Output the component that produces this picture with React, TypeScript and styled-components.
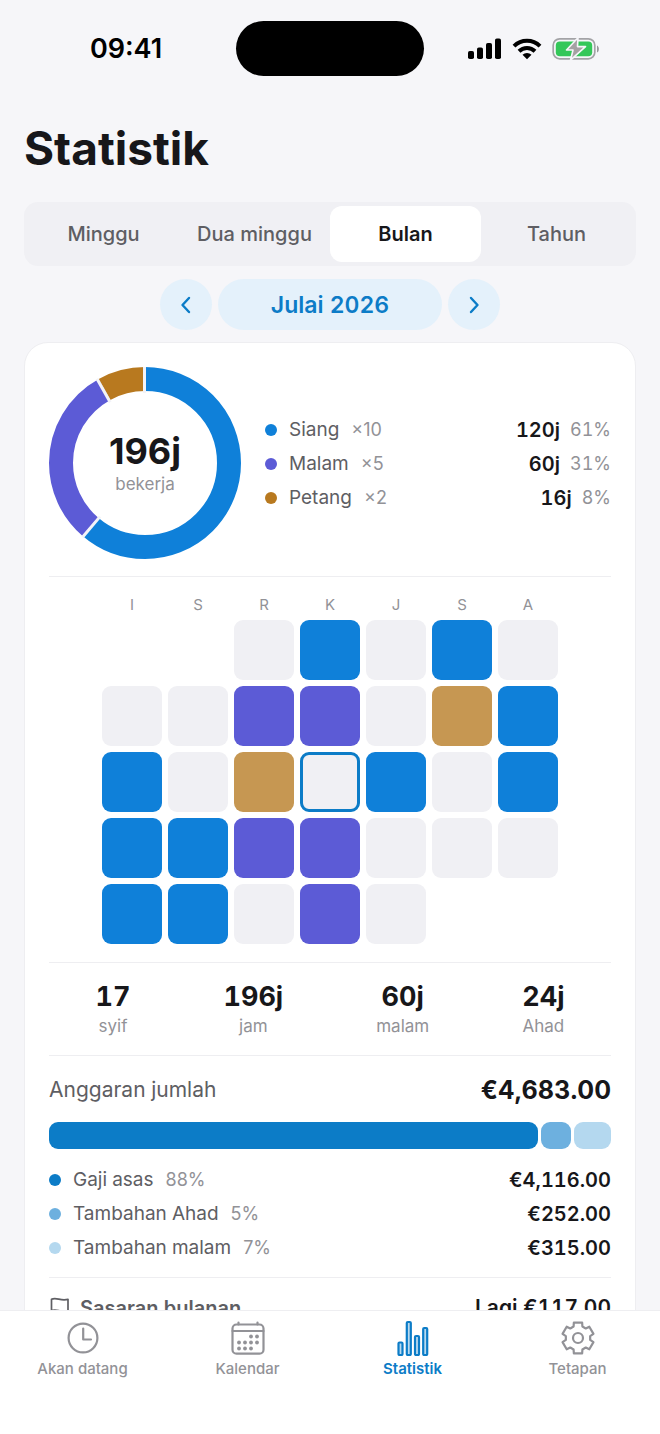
import React, { useState } from 'react'
import styled, { createGlobalStyle } from 'styled-components'

const color = {
  page: '#f6f6f9',
  card: '#ffffff',
  fill: '#f0f0f4',
  line: '#eeeef1',
  ink: '#17171a',
  text: '#5e5e63',
  muted: '#929297',
  accent: '#0c7cc7',
  accentSoft: '#e4f1fb',
  day: '#0f80d9',
  night: '#5c5bd6',
  evening: '#b8791f',
  eveningSoft: '#c69752',
}

const GlobalStyle = createGlobalStyle`
  * {
    box-sizing: border-box;
  }
  body {
    margin: 0;
    background: ${color.page};
    color: ${color.ink};
    font-family: Inter, 'Liberation Sans', sans-serif;
    font-variant-numeric: tabular-nums;
  }
  button {
    border: 0;
    padding: 0;
    font: inherit;
    cursor: pointer;
  }
`

const Screen = styled.div`
  display: flex;
  flex-direction: column;
  height: 100vh;
`
const StatusBar = styled.header`
  display: grid;
  grid-template-columns: 1fr 188px 1fr;
  align-items: center;
  padding-top: 21px;
`
const Clock = styled.time`
  padding-left: 16px;
  text-align: center;
  font-size: 27px;
  font-weight: 600;
  font-variant-numeric: normal;
  color: #000;
`
const Island = styled.div`
  height: 55px;
  border-radius: 28px;
  background: #000;
`
const StatusIcons = styled.div`
  display: flex;
  justify-content: center;
  align-items: center;
  gap: 10px;
  padding-right: 16px;
`
const Content = styled.main`
  flex: 1;
  min-height: 0;
  overflow: hidden;
  padding: 44px 24px 0;
`
const Title = styled.h1`
  margin: 0 0 26px;
  font-size: 46px;
  line-height: 56px;
  font-weight: 700;
`
const Segments = styled.div`
  display: grid;
  grid-template-columns: repeat(4, 1fr);
  height: 64px;
  padding: 4px;
  border-radius: 14px;
  background: ${color.fill};
`
const Segment = styled.button<{ $active: boolean }>`
  border-radius: 12px;
  background: ${(p) => (p.$active ? color.card : 'transparent')};
  color: ${(p) => (p.$active ? color.ink : color.text)};
  font-size: 20px;
  font-weight: ${(p) => (p.$active ? 600 : 500)};
  white-space: nowrap;
`
const Period = styled.div`
  display: flex;
  justify-content: center;
  gap: 6px;
  margin: 13px 0 12px;
`
const PeriodButton = styled.button<{ $wide?: boolean }>`
  display: flex;
  align-items: center;
  justify-content: center;
  width: ${(p) => (p.$wide ? 224 : 52)}px;
  height: 51px;
  border-radius: 26px;
  background: ${color.accentSoft};
  color: ${color.accent};
  font-size: 23px;
  font-weight: 600;
`
const Card = styled.section`
  padding: 24px;
  border: 1px solid ${color.line};
  border-radius: 24px;
  background: ${color.card};
`
const Block = styled.div`
  padding: 18px 0;
  border-bottom: 1px solid ${color.line};

  &:last-child {
    border-bottom: 0;
  }
`
const Overview = styled(Block)`
  display: flex;
  align-items: center;
  gap: 24px;
  padding: 0 0 17px;
`
const Donut = styled.div`
  display: grid;
  place-items: center;
  flex: none;
  width: 192px;
  height: 192px;

  > * {
    grid-area: 1 / 1;
  }
`
const DonutLabel = styled.div`
  text-align: center;
`
const Total = styled.div`
  font-size: 36px;
  line-height: 42px;
  font-weight: 700;
  font-variant-numeric: normal;
`
const Caption = styled.div`
  font-size: 17px;
  line-height: 24px;
  color: ${color.muted};
`
const Legend = styled.ul`
  display: flex;
  flex-direction: column;
  flex: 1;
  gap: 10px;
  margin: 0;
  padding: 2px 0 0;
  list-style: none;
`
const LegendRow = styled.li`
  display: flex;
  align-items: center;
  font-size: 19px;
  line-height: 24px;
  color: ${color.text};
`
const Dot = styled.span<{ $color: string }>`
  width: 12px;
  height: 12px;
  margin-right: 12px;
  border-radius: 50%;
  background: ${(p) => p.$color};
`
const Note = styled.span`
  margin-left: 12px;
  font-size: 18px;
  font-variant-numeric: normal;
  color: ${color.muted};
`
const Share = styled(Note)`
  margin-left: 10px;
  font-variant-numeric: tabular-nums;
`
const Amount = styled.span<{ $large?: boolean }>`
  margin-left: auto;
  font-size: ${(p) => (p.$large ? 21 : 20)}px;
  font-weight: 600;
  color: ${color.ink};
`
const Calendar = styled.div`
  display: grid;
  grid-template-columns: repeat(7, 60px);
  justify-content: center;
  gap: 6px;
`
const Weekday = styled.div`
  font-size: 15px;
  line-height: 19px;
  text-align: center;
  color: ${color.muted};
`
const Day = styled.div<{ $color: string; $today: boolean }>`
  height: 60px;
  border: ${(p) => (p.$today ? `3px solid ${color.accent}` : 0)};
  border-radius: 9px;
  background: ${(p) => p.$color};
`
const Figures = styled(Block)`
  display: flex;
  justify-content: space-around;
  padding: 18px 0 17px;
  text-align: center;
`
const FigureValue = styled.div`
  margin-bottom: 1px;
  font-size: 27px;
  line-height: 32px;
  font-weight: 700;
`
const Earnings = styled(Block)`
  padding-bottom: 17px;
`
const Estimate = styled.div`
  display: flex;
  justify-content: space-between;
  line-height: 32px;
  font-size: 21px;
  color: ${color.text};
`
const EstimateTotal = styled.span`
  font-size: 25px;
  font-weight: 700;
  font-variant-numeric: normal;
  color: ${color.ink};
`
const Bar = styled.div`
  display: flex;
  gap: 3px;
  height: 27px;
  margin: 16px 0 17px;
`
const BarPart = styled.div<{ $color: string }>`
  border-radius: 9px;
  background: ${(p) => p.$color};
`
const Goal = styled.div`
  display: flex;
  align-items: center;
  gap: 10px;
  font-size: 20px;
  line-height: 24px;
  font-weight: 600;
  color: ${color.text};
`
const TabBar = styled.nav`
  display: grid;
  grid-template-columns: repeat(4, 1fr);
  flex: none;
  height: 124px;
  border-top: 1px solid ${color.line};
  background: ${color.card};
`
const TabLink = styled.a<{ $active: boolean }>`
  display: flex;
  flex-direction: column;
  align-items: center;
  gap: 3px;
  padding-top: 9px;
  font-size: 15px;
  line-height: 20px;
  font-weight: ${(p) => (p.$active ? 600 : 500)};
  color: ${(p) => (p.$active ? color.accent : color.muted)};
  text-decoration: none;
`

const shifts = [
  { name: 'Siang', count: 10, hours: 120, share: 61, color: color.day },
  { name: 'Malam', count: 5, hours: 60, share: 31, color: color.night },
  { name: 'Petang', count: 2, hours: 16, share: 8, color: color.evening },
]

const pay = [
  { name: 'Gaji asas', share: 88, value: 4116, label: '€4,116.00', color: color.accent },
  { name: 'Tambahan Ahad', share: 5, value: 252, label: '€252.00', color: '#6db0df' },
  { name: 'Tambahan malam', share: 7, value: 315, label: '€315.00', color: '#b4d8ef' },
]

const figures = [
  { value: '17', label: 'syif' },
  { value: '196j', label: 'jam' },
  { value: '60j', label: 'malam' },
  { value: '24j', label: 'Ahad' },
]

// one letter per day: S siang, M malam, P petang, T today, - off, blank outside the month
const month = ['  -S-S-', '--MM-PS', 'S-PTS-S', 'SSMM---', 'SS-M-  ']
const dayColor: Record<string, string> = {
  S: color.day,
  M: color.night,
  P: color.eveningSoft,
  T: color.fill,
  '-': color.fill,
  ' ': 'transparent',
}

const RADIUS = 84
const LENGTH = 2 * Math.PI * RADIUS

function DonutChart() {
  const total = shifts.reduce((sum, s) => sum + s.hours, 0)
  let start = 0
  const arcs = shifts.map((s) => {
    const arc = { color: s.color, start, size: s.hours / total }
    start += arc.size
    return arc
  })
  return (
    <svg width="192" height="192" viewBox="0 0 192 192">
      <g transform="rotate(-90 96 96)" fill="none">
        {arcs.map((a) => (
          <circle
            key={a.color}
            cx="96"
            cy="96"
            r={RADIUS}
            stroke={a.color}
            strokeWidth="24"
            strokeDasharray={`${a.size * LENGTH} ${LENGTH}`}
            strokeDashoffset={-a.start * LENGTH}
          />
        ))}
        {arcs.map((a) => (
          <path key={a.color} d="M166 95.500h27" stroke="#f3f3f8" strokeWidth="3" transform={`rotate(${a.start * 360} 96 96)`} />
        ))}
      </g>
    </svg>
  )
}

const SignalIcon = () => (
  <svg width="34" height="22" viewBox="0 0 34 22">
    <rect x="0" y="13" width="6" height="8" rx="1.800" />
    <rect x="9" y="9.500" width="6" height="11.500" rx="1.800" />
    <rect x="18" y="5" width="6" height="16" rx="1.800" />
    <rect x="27" y="0.500" width="6" height="20.500" rx="1.800" />
  </svg>
)

const WifiIcon = () => (
  <svg width="30" height="22" viewBox="0 0 30 22">
    <g fill="none" stroke="#000" strokeWidth="4">
      <path d="M2 8.200a18.500 18.500 0 0 1 26 0" />
      <path d="M7 13.300a11.500 11.500 0 0 1 16 0" />
    </g>
    <path d="M10.500 16.800a6.500 6.500 0 0 1 9 0L15 21.300z" />
  </svg>
)

const BatteryIcon = () => (
  <svg width="48" height="24" viewBox="0 0 48 24">
    <rect x="1.200" y="1.800" width="41.600" height="20" rx="6.500" fill="none" stroke="#a3a3a6" strokeWidth="1.700" />
    <rect x="3.800" y="4.400" width="36.400" height="14.800" rx="4" fill="#34c759" />
    <path d="M45 8.500c2.500 1 2.500 6 0 7z" fill="#98989b" />
    <path
      d="M26 0.800 14.500 13h6.500l-2.500 10.200L33.500 9.600h-8z"
      fill="#a5a1a3"
      stroke={color.page}
      strokeWidth="1.600"
      strokeLinejoin="round"
    />
  </svg>
)

const Chevron = ({ d }: { d: string }) => (
  <svg width="22" height="22" viewBox="0 0 22 22" fill="none" stroke="currentColor" strokeWidth="2.400" strokeLinecap="round" strokeLinejoin="round">
    <path d={d} />
  </svg>
)

const FlagIcon = () => (
  <svg width="21" height="24" viewBox="0 0 21 24" fill="none" stroke="currentColor" strokeWidth="1.700" strokeLinecap="round" strokeLinejoin="round">
    <path d="M2.500 22.500V3.300c5-2.600 9 2.200 16.500 0v11.400c-7.500 2.200-11.500-2.600-16.500 0" />
  </svg>
)

// six flat teeth around the hub
const gearPath =
  Array.from({ length: 6 }, (_, i) =>
    [
      [-21, 12.3],
      [-15, 16],
      [15, 16],
      [21, 12.3],
    ].map(([offset, r]) => {
      const a = ((i * 60 + offset - 90) * Math.PI) / 180
      return `${(18 + r * Math.cos(a)).toFixed(2)} ${(18 + r * Math.sin(a)).toFixed(2)}`
    }),
  )
    .flat()
    .map((p, i) => (i ? 'L' : 'M') + p)
    .join('') + 'z'

const calendarDots = [
  [21, 16.5], [27, 16.5],
  [9, 22.5], [15, 22.5], [21, 22.5], [27, 22.5],
  [9, 28.5], [15, 28.5], [21, 28.5],
]

const TabIcon = ({ children }: { children: React.ReactNode }) => (
  <svg width="36" height="36" viewBox="0 0 36 36" fill="none" stroke="currentColor" strokeWidth="2.200" strokeLinecap="round" strokeLinejoin="round">
    {children}
  </svg>
)

const tabs = [
  {
    label: 'Akan datang',
    icon: (
      <>
        <circle cx="18" cy="18" r="14.400" />
        <path d="M18.200 8.500V19.500h7.800" />
      </>
    ),
  },
  {
    label: 'Kalendar',
    icon: (
      <>
        <rect x="2.500" y="4.500" width="31" height="29.200" rx="4" />
        <path d="M2.500 11h31M8.500 2.500v2M27.500 2.500v2" />
        <g fill="currentColor" stroke="none">
          {calendarDots.map(([x, y]) => (
            <circle key={`${x}-${y}`} cx={x} cy={y} r="1.900" />
          ))}
        </g>
      </>
    ),
  },
  {
    label: 'Statistik',
    icon: (
      <g fill="#b9daf0">
        <rect x="3.500" y="22.500" width="4" height="12.500" rx="1" />
        <rect x="11.800" y="2" width="4" height="33" rx="1" />
        <rect x="20" y="16" width="4" height="19" rx="1" />
        <rect x="28.200" y="8" width="4" height="27" rx="1" />
      </g>
    ),
  },
  {
    label: 'Tetapan',
    icon: (
      <>
        <path d={gearPath} />
        <circle cx="18" cy="18" r="5" />
      </>
    ),
  },
]

const ranges = ['Minggu', 'Dua minggu', 'Bulan', 'Tahun']

export default function App() {
  const [range, setRange] = useState('Bulan')
  return (
    <Screen>
      <GlobalStyle />
      <StatusBar>
        <Clock>09:41</Clock>
        <Island />
        <StatusIcons>
          <SignalIcon />
          <WifiIcon />
          <BatteryIcon />
        </StatusIcons>
      </StatusBar>
      <Content>
        <Title>Statistik</Title>
        <Segments>
          {ranges.map((r) => (
            <Segment key={r} $active={r === range} aria-pressed={r === range} onClick={() => setRange(r)}>
              {r}
            </Segment>
          ))}
        </Segments>
        <Period>
          <PeriodButton aria-label="Bulan sebelumnya">
            <Chevron d="M14 4 7.500 11 14 18" />
          </PeriodButton>
          <PeriodButton $wide>Julai 2026</PeriodButton>
          <PeriodButton aria-label="Bulan berikutnya">
            <Chevron d="M8 4l6.500 7L8 18" />
          </PeriodButton>
        </Period>
        <Card>
          <Overview>
            <Donut>
              <DonutChart />
              <DonutLabel>
                <Total>196j</Total>
                <Caption>bekerja</Caption>
              </DonutLabel>
            </Donut>
            <Legend>
              {shifts.map((s) => (
                <LegendRow key={s.name}>
                  <Dot $color={s.color} />
                  {s.name}
                  <Note>×{s.count}</Note>
                  <Amount>{s.hours}j</Amount>
                  <Share>{s.share}%</Share>
                </LegendRow>
              ))}
            </Legend>
          </Overview>
          <Block>
            <Calendar>
              {['I', 'S', 'R', 'K', 'J', 'S', 'A'].map((d, i) => (
                <Weekday key={i}>{d}</Weekday>
              ))}
              {month
                .join('')
                .split('')
                .map((d, i) => (
                  <Day key={i} $color={dayColor[d]} $today={d === 'T'} />
                ))}
            </Calendar>
          </Block>
          <Figures>
            {figures.map((f) => (
              <div key={f.label}>
                <FigureValue>{f.value}</FigureValue>
                <Caption>{f.label}</Caption>
              </div>
            ))}
          </Figures>
          <Earnings>
            <Estimate>
              Anggaran jumlah
              <EstimateTotal>€4,683.00</EstimateTotal>
            </Estimate>
            <Bar>
              {pay.map((p) => (
                <BarPart key={p.name} $color={p.color} style={{ flexGrow: p.value }} />
              ))}
            </Bar>
            <Legend>
              {pay.map((p) => (
                <LegendRow key={p.name}>
                  <Dot $color={p.color} />
                  {p.name}
                  <Note>{p.share}%</Note>
                  <Amount>{p.label}</Amount>
                </LegendRow>
              ))}
            </Legend>
          </Earnings>
          <Block>
            <Goal>
              <FlagIcon />
              Sasaran bulanan
              <Amount $large>Lagi €117.00</Amount>
            </Goal>
          </Block>
        </Card>
      </Content>
      <TabBar>
        {tabs.map((t) => (
          <TabLink key={t.label} href="#" $active={t.label === 'Statistik'}>
            <TabIcon>{t.icon}</TabIcon>
            {t.label}
          </TabLink>
        ))}
      </TabBar>
    </Screen>
  )
}
